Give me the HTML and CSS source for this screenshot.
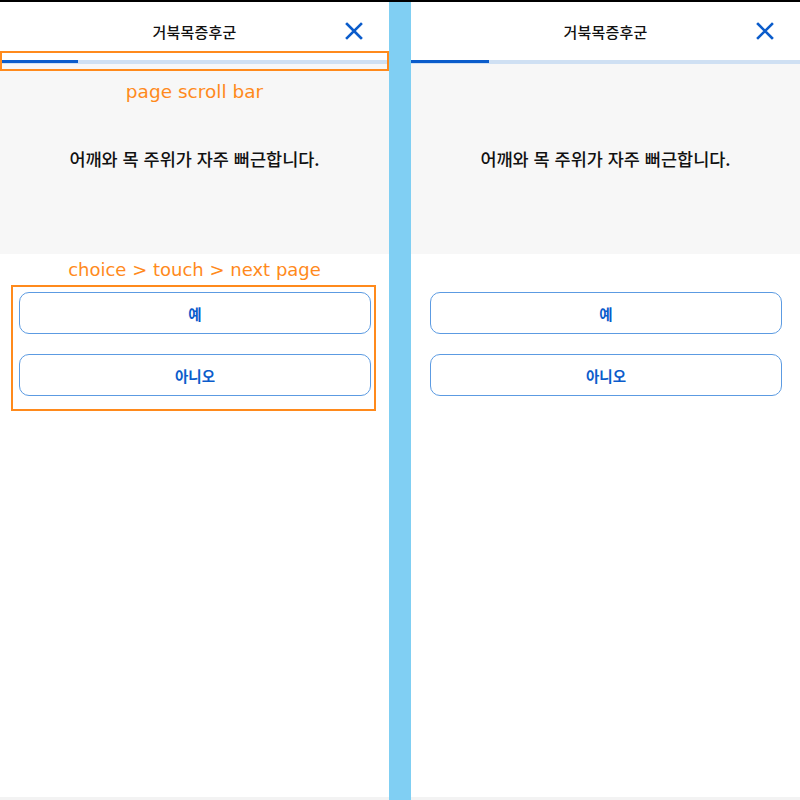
FILE: index.html
```html
<!DOCTYPE html>
<html lang="ko">
<head>
    <meta charset="UTF-8">
    <meta name="viewport" content="width=device-width, initial-scale=1.0">
    <title>거북목증후군</title>
    <link rel="stylesheet" href="styles.css">
</head>
<body>
    <div class="screens">
        <div class="panel">
            <div class="header">
                <span class="title">거북목증후군</span>
                <svg class="close" viewBox="0 0 20 20" width="20" height="20">
                    <path d="M3 3 L17 17 M17 3 L3 17" stroke="#0b5ccb" stroke-width="2.6" stroke-linecap="square"/>
                </svg>
            </div>
            <div class="progress"><div class="progress-fill" style="width: 20%"></div></div>
            <div class="question">어깨와 목 주위가 자주 뻐근합니다.</div>
            <div class="answers">
                <button class="answer">예</button>
                <button class="answer">아니오</button>
            </div>

            <!-- annotations -->
            <div class="note-box note-bar"></div>
            <div class="note-text note-bar-text">page scroll bar</div>
            <div class="note-text note-choice-text">choice &gt; touch &gt; next page</div>
            <div class="note-box note-choice"></div>
        </div>

        <div class="divider"></div>

        <div class="panel">
            <div class="header">
                <span class="title">거북목증후군</span>
                <svg class="close" viewBox="0 0 20 20" width="20" height="20">
                    <path d="M3 3 L17 17 M17 3 L3 17" stroke="#0b5ccb" stroke-width="2.6" stroke-linecap="square"/>
                </svg>
            </div>
            <div class="progress"><div class="progress-fill" style="width: 20%"></div></div>
            <div class="question">어깨와 목 주위가 자주 뻐근합니다.</div>
            <div class="answers">
                <button class="answer">예</button>
                <button class="answer">아니오</button>
            </div>
        </div>
    </div>
</body>
</html>
```

FILE: styles.css
```css
html, body {
    margin: 0;
    padding: 0;
}
body {
    width: 800px;
    height: 800px;
    overflow: hidden;
    background: #fff;
    border-top: 2px solid #000;
    box-sizing: border-box;
    font-family: "Noto Sans CJK KR", "Noto Sans", sans-serif;
}
.screens {
    display: flex;
    height: 798px;
}
.panel {
    position: relative;
    width: 389px;
    background: #fff;
    border-bottom: 3px solid #f3f3f3;
    box-sizing: border-box;
}
.divider {
    width: 22px;
    background: #80cff3;
}
.header {
    position: relative;
    height: 58px;
    display: flex;
    align-items: center;
    justify-content: center;
}
.title {
    font-size: 15px;
    font-weight: 500;
    color: #111;
    letter-spacing: 0.2px;
}
.close {
    position: absolute;
    right: 25px;
    top: 19px;
}
.progress {
    height: 4px;
    background: #cfe0f3;
}
.progress-fill {
    height: 3px;
    background: #0b5ccb;
}
.question {
    height: 190px;
    padding-bottom: 2px;
    box-sizing: border-box;
    background: #f7f7f7;
    display: flex;
    align-items: center;
    justify-content: center;
    font-size: 17.5px;
    font-weight: 500;
    color: #111;
}
.answers {
    display: flex;
    flex-direction: column;
    gap: 20px;
    padding: 38px 18px 0 19px;
}
.answer {
    height: 42px;
    background: #fff;
    border: 1px solid #5c9be2;
    border-radius: 10px;
    color: #0b5ccb;
    font-family: inherit;
    font-size: 14.5px;
    font-weight: 700;
    padding: 0;
}

/* annotations */
.note-box {
    position: absolute;
    border: 2px solid #ff8a1c;
    box-sizing: border-box;
}
.note-bar {
    left: 0;
    top: 49px;
    width: 389px;
    height: 20px;
}
.note-choice {
    left: 11px;
    top: 283px;
    width: 365px;
    height: 126px;
}
.note-text {
    position: absolute;
    left: 0;
    right: 0;
    text-align: center;
    color: #ff8a1c;
    font-family: "DejaVu Sans", sans-serif;
    font-size: 18px;
}
.note-bar-text {
    top: 79px;
    font-size: 18.5px;
}
.note-choice-text {
    top: 257px;
}
```
